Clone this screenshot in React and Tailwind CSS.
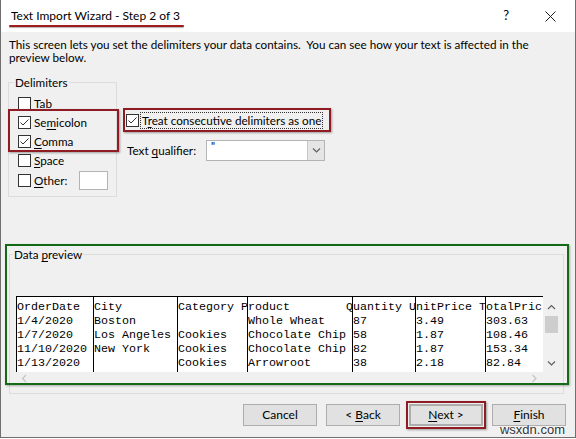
import React from 'react'

const columns = [
  { w: 11, cells: ['OrderDate', '1/4/2020', '1/7/2020', '11/10/2020', '1/13/2020'] },
  { w: 12, cells: ['City', 'Boston', 'Los Angeles', 'New York', ''] },
  { w: 10, cells: ['Category P', '', 'Cookies', 'Cookies', 'Cookies'] },
  { w: 15, cells: ['roduct        Q', 'Whole Wheat', 'Chocolate Chip', 'Chocolate Chip', 'Arrowroot'] },
  { w: 9, cells: ['uantity U', '87', '58', '82', '38'] },
  { w: 10, cells: ['nitPrice T', '3.49', '1.87', '1.87', '2.18'] },
  { w: 8, cells: ['otalPric', '303.63', '108.46', '153.34', '82.84'] },
]

function Check({ checked }) {
  return (
    <span className="w-[13px] h-[13px] border border-[#333] bg-white flex items-center justify-center shrink-0">
      {checked && (
        <svg width="11" height="11" viewBox="0 0 11 11">
          <path d="M1.5 5.5 L4 8 L9.5 2.5" fill="none" stroke="#333" strokeWidth="1" />
        </svg>
      )}
    </span>
  )
}

function Option({ checked, children, className = '' }) {
  return (
    <div className={`flex items-center h-[19px] ${className}`}>
      <Check checked={checked} />
      <span className="ml-[3px] whitespace-nowrap">{children}</span>
    </div>
  )
}

function Chevron({ dir, color = '#606060' }) {
  const d = {
    up: 'M1 5 L4.5 1.5 L8 5',
    down: 'M1 1.5 L4.5 5 L8 1.5',
    left: 'M5 1 L1.5 4.5 L5 8',
    right: 'M1.5 1 L5 4.5 L1.5 8',
  }[dir]
  const vertical = dir === 'up' || dir === 'down'
  return (
    <svg width={vertical ? 9 : 7} height={vertical ? 7 : 9} viewBox={vertical ? '0 0 9 7' : '0 0 7 9'}>
      <path d={d} fill="none" stroke={color} strokeWidth="1.2" />
    </svg>
  )
}

function Button({ children, className = '' }) {
  return (
    <button className={`w-[74px] h-[22px] bg-[#e1e1e1] border border-[#adadad] text-[12px] leading-none text-black ${className}`}>
      {children}
    </button>
  )
}

export default function App() {
  return (
    <div className="w-[576px] h-[438px] bg-[#f0f0f0] border-x border-b border-[#6f6f6f] relative overflow-hidden text-[11.7px] text-black font-['Lato','Noto_Sans',sans-serif]">
      {/* title bar */}
      <div className="h-[32px] bg-white flex items-center pl-[10px] relative">
        <span className="text-[12px] leading-none relative whitespace-nowrap">
          Text Import Wizard - Step 2 of 3
          <span className="absolute left-[-2px] right-[-4px] top-[15px] h-[2px] rounded-full bg-[#a01c1c] shadow-[0_1px_1px_rgba(0,0,0,0.3)]" />
        </span>
        <span className="ml-auto mr-[36px] text-[13px]">?</span>
        <svg width="11" height="11" viewBox="0 0 11 11" className="mr-[19px]">
          <path d="M0.5 0.5 L10.5 10.5 M10.5 0.5 L0.5 10.5" stroke="#222" strokeWidth="1" />
        </svg>
      </div>

      <p className="px-[8px] pt-[6px] leading-[13px] whitespace-pre">
        {'This screen lets you set the delimiters your data contains.  You can see how your text is affected in the'}
        <br />
        preview below.
      </p>

      <div className="flex mt-[12px]">
        <fieldset className="relative ml-[7px] w-[109px] h-[121px] border border-[#dcdcdc]">
          <legend className="ml-[5px] px-[1px] leading-[13px]">Delimiters</legend>
          <div className="relative pl-[9px] pt-[5px]">
            <Option>Tab</Option>
            <Option checked>Se<u className="underline-offset-2">m</u>icolon</Option>
            <Option checked><u className="underline-offset-2">C</u>omma</Option>
            <Option><u className="underline-offset-2">S</u>pace</Option>
            <div className="flex items-center h-[21px]">
              <Check />
              <span className="ml-[3px] w-[45px] shrink-0"><u className="underline-offset-2">O</u>ther:</span>
              <span className="w-[29px] h-[19px] shrink-0 bg-white border border-[#b4b4b4]" />
            </div>
            <div className="absolute left-[-1px] top-[20px] w-[111px] h-[43px] border-[2.5px] border-[#8e1c22] shadow-[1px_1px_2px_rgba(0,0,0,0.35)]" />
          </div>
        </fieldset>

        <div className="ml-[6px] mt-[32px]">
          <div className="flex items-center w-[208px] h-[24px] border-[2.5px] border-[#8e1c22] shadow-[1px_1px_2px_rgba(0,0,0,0.35)] pl-[1px]">
            <Check checked />
            <span className="ml-[1px] px-[1px] leading-[15px] whitespace-nowrap border border-dotted border-[#333]">
              T<u className="underline-offset-2">r</u>eat consecutive delimiters as one
            </span>
          </div>
          <div className="flex items-center mt-[8px] h-[21px]">
            <span className="ml-[4px] w-[79px] whitespace-nowrap">Text <u className="underline-offset-2">q</u>ualifier:</span>
            <div className="w-[119px] h-[21px] bg-white border border-[#b4b4b4] flex">
              <span className="flex-1 pl-[4px] text-[11px] leading-[10px]">"</span>
              <span className="w-[17px] h-full bg-[#e5e5e5] border-l border-[#c8c8c8] flex items-center justify-center">
                <Chevron dir="down" />
              </span>
            </div>
          </div>
        </div>
      </div>

      {/* data preview */}
      <fieldset className="relative mt-[51px] ml-[8px] w-[555px] h-[146px] border border-[#dcdcdc]">
        <legend className="ml-[3px] px-[1px] leading-[13px]">Data <u className="underline-offset-2">p</u>review</legend>
        <div className="ml-[6px] mt-[35px] w-[544px]">
          <div className="flex h-[76px]">
            <div className="flex-1 bg-white flex items-stretch overflow-hidden border-t border-black font-['Liberation_Mono',monospace] text-[11.67px] leading-[14px]">
              {columns.map((col, i) => (
                <div key={i} className="border-l border-black pt-[3px] shrink-0 whitespace-pre" style={{ width: col.w * 7 }}>
                  {col.cells.map((c, j) => (
                    <div key={j} className="h-[14px]">{c}</div>
                  ))}
                </div>
              ))}
            </div>
            <div className="w-[17px] bg-[#f0f0f0] flex flex-col items-center">
              <div className="h-[17px] flex items-center justify-center mt-[3px]"><Chevron dir="up" /></div>
              <div className="w-[13px] h-[17px] bg-[#cdcdcd]" />
              <div className="flex-1" />
              <div className="h-[17px] flex items-center justify-center"><Chevron dir="down" /></div>
            </div>
          </div>
          <div className="flex h-[12px]">
            <div className="flex-1 flex items-center justify-between px-[5px]">
              <Chevron dir="left" color="#c4c4c4" />
              <Chevron dir="right" color="#c4c4c4" />
            </div>
            <div className="w-[17px]" />
          </div>
        </div>
        <div className="absolute left-[-5px] top-[-17px] w-[564px] h-[141px] border-2 border-[#136b18] shadow-[1px_1px_2px_rgba(0,0,0,0.3)] pointer-events-none" />
      </fieldset>

      <div className="flex justify-end gap-[9px] pr-[9px] mt-[10px]">
        <Button>Cancel</Button>
        <Button>&lt; <u className="underline-offset-2">B</u>ack</Button>
        <div className="relative">
          <Button className="border-2 border-[#0078d7]"><u className="underline-offset-2">N</u>ext &gt;</Button>
          <div className="absolute left-[-3px] top-[-3px] w-[80px] h-[28px] border-[2.5px] border-[#8e1c22] shadow-[1px_1px_2px_rgba(0,0,0,0.35)]" />
        </div>
        <Button><u className="underline-offset-2">F</u>inish</Button>
      </div>

      <span className="absolute right-[10px] bottom-[1px] text-[13px] leading-none text-[#333] font-['Liberation_Sans',sans-serif] [text-shadow:0_0_2px_white,0_0_2px_white]">wsxdn.com</span>
    </div>
  )
}
